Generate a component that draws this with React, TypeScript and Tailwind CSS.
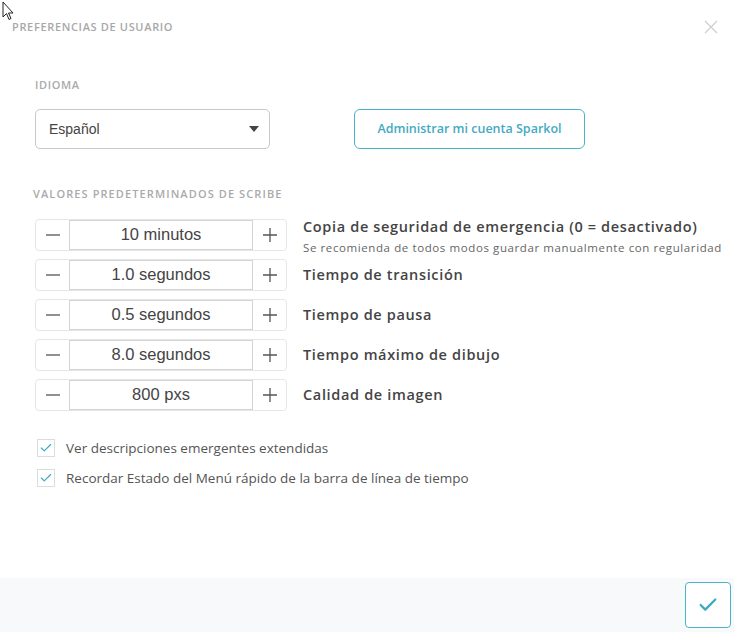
import { Check } from 'lucide-react'

const rows = [
  { value: '10 minutos', label: 'Copia de seguridad de emergencia (0 = desactivado)', hint: 'Se recomienda de todos modos guardar manualmente con regularidad' },
  { value: '1.0 segundos', label: 'Tiempo de transición' },
  { value: '0.5 segundos', label: 'Tiempo de pausa' },
  { value: '8.0 segundos', label: 'Tiempo máximo de dibujo' },
  { value: '800 pxs', label: 'Calidad de imagen' },
]

const checks = [
  'Ver descripciones emergentes extendidas',
  'Recordar Estado del Menú rápido de la barra de línea de tiempo',
]

function Stepper({ value }: { value: string }) {
  return (
    <div className="flex h-[32px] w-[252px] shrink-0 rounded-[4px] border border-[#e6e6e6] bg-white">
      <button type="button" className="flex w-[33px] items-center justify-center text-[#555]">
        <svg width="16" height="16" viewBox="0 0 16 16" fill="none" stroke="currentColor" strokeWidth="1.3"><path d="M1 8h14" /></svg>
      </button>
      <div className="flex flex-1 items-center justify-center border-x border-y border-[#d4d4d4] text-[16.5px] text-[#444] [font-family:'Liberation_Sans',Arial,sans-serif]">
        {value}
      </div>
      <button type="button" className="flex w-[33px] items-center justify-center text-[#555]">
        <svg width="16" height="16" viewBox="0 0 16 16" fill="none" stroke="currentColor" strokeWidth="1.3"><path d="M1 8h14M8 1v14" /></svg>
      </button>
    </div>
  )
}

export default function App() {
  return (
    <div className="relative flex h-[632px] w-[734px] flex-col overflow-hidden bg-white [font-family:'Open_Sans','Noto_Sans',sans-serif]">
      <svg className="absolute left-[2px] top-[1px]" width="14" height="20" viewBox="0 0 14 20">
        <path d="M1 1v15l3.5-3.5 2.5 6 2-1-2.5-5.5H11z" fill="#fff" stroke="#222" strokeWidth="1" strokeLinejoin="round" />
      </svg>

      <div className="flex items-start justify-between pl-[12px] pr-[16px] pt-[19px]">
        <h1 className="text-[11px] font-semibold uppercase tracking-[0.06em] text-[#a8a8a8]">Preferencias de usuario</h1>
        <svg className="mt-[1px]" width="14" height="14" viewBox="0 0 14 14" stroke="#cfcfcf" strokeWidth="1.3"><path d="M1 1l12 12M13 1L1 13" /></svg>
      </div>

      <div className="flex flex-1 flex-col px-[35px]">
        <div className="mt-[41px] text-[11px] font-semibold uppercase tracking-[0.06em] text-[#aaa]">Idioma</div>
        <div className="mt-[16px] flex items-center gap-[84px]">
          <div className="flex h-[40px] w-[235px] items-center justify-between rounded-[5px] border border-[#c8c8c8] pl-[13px] pr-[10px] text-[14px] text-[#444] [font-family:'Liberation_Sans',Arial,sans-serif]">
            <span>Español</span>
            <svg width="10" height="6" viewBox="0 0 10 6"><path d="M0 0h10L5 6z" fill="#444" /></svg>
          </div>
          <button type="button" className="h-[40px] w-[231px] rounded-[6px] border border-[#4bb3c8] text-[12.5px] font-semibold text-[#44aac4]">
            Administrar mi cuenta Sparkol
          </button>
        </div>

        <div className="ml-[-2px] mt-[37px] text-[11px] font-semibold uppercase tracking-[0.1em] text-[#aaa]">Valores predeterminados de Scribe</div>
        <div className="mt-[16px] flex flex-col gap-[8px]">
          {rows.map((r) => (
            <div key={r.value} className={`flex h-[32px] gap-[16px] ${r.hint ? 'items-start' : 'items-center'}`}>
              <Stepper value={r.value} />
              <div className="flex flex-col">
                <div className="text-[14.5px] font-semibold leading-[16px] tracking-[0.045em] text-[#444]">{r.label}</div>
                {r.hint && <div className="mt-[4px] whitespace-nowrap text-[11.5px] tracking-[0.052em] text-[#666]">{r.hint}</div>}
              </div>
            </div>
          ))}
        </div>

        <div className="mt-[27px] flex flex-col gap-[10px]">
          {checks.map((c) => (
            <label key={c} className="flex items-center gap-[11px] pl-[2px]">
              <span className="flex h-[18px] w-[18px] items-center justify-center border border-[#dcdcdc] bg-white">
                <Check size={14} strokeWidth={2} className="text-[#3fa9c4]" />
              </span>
              <span className="text-[13.5px] text-[#555]">{c}</span>
            </label>
          ))}
        </div>
      </div>

      <div className="flex h-[54px] items-center justify-end bg-[#f8f9fb] pr-[3px]">
        <button type="button" className="flex h-[46px] w-[46px] items-center justify-center rounded-[4px] border border-[#4bb3c8] bg-white">
          <Check size={22} strokeWidth={2.5} className="text-[#3fa9c4]" />
        </button>
      </div>
    </div>
  )
}
